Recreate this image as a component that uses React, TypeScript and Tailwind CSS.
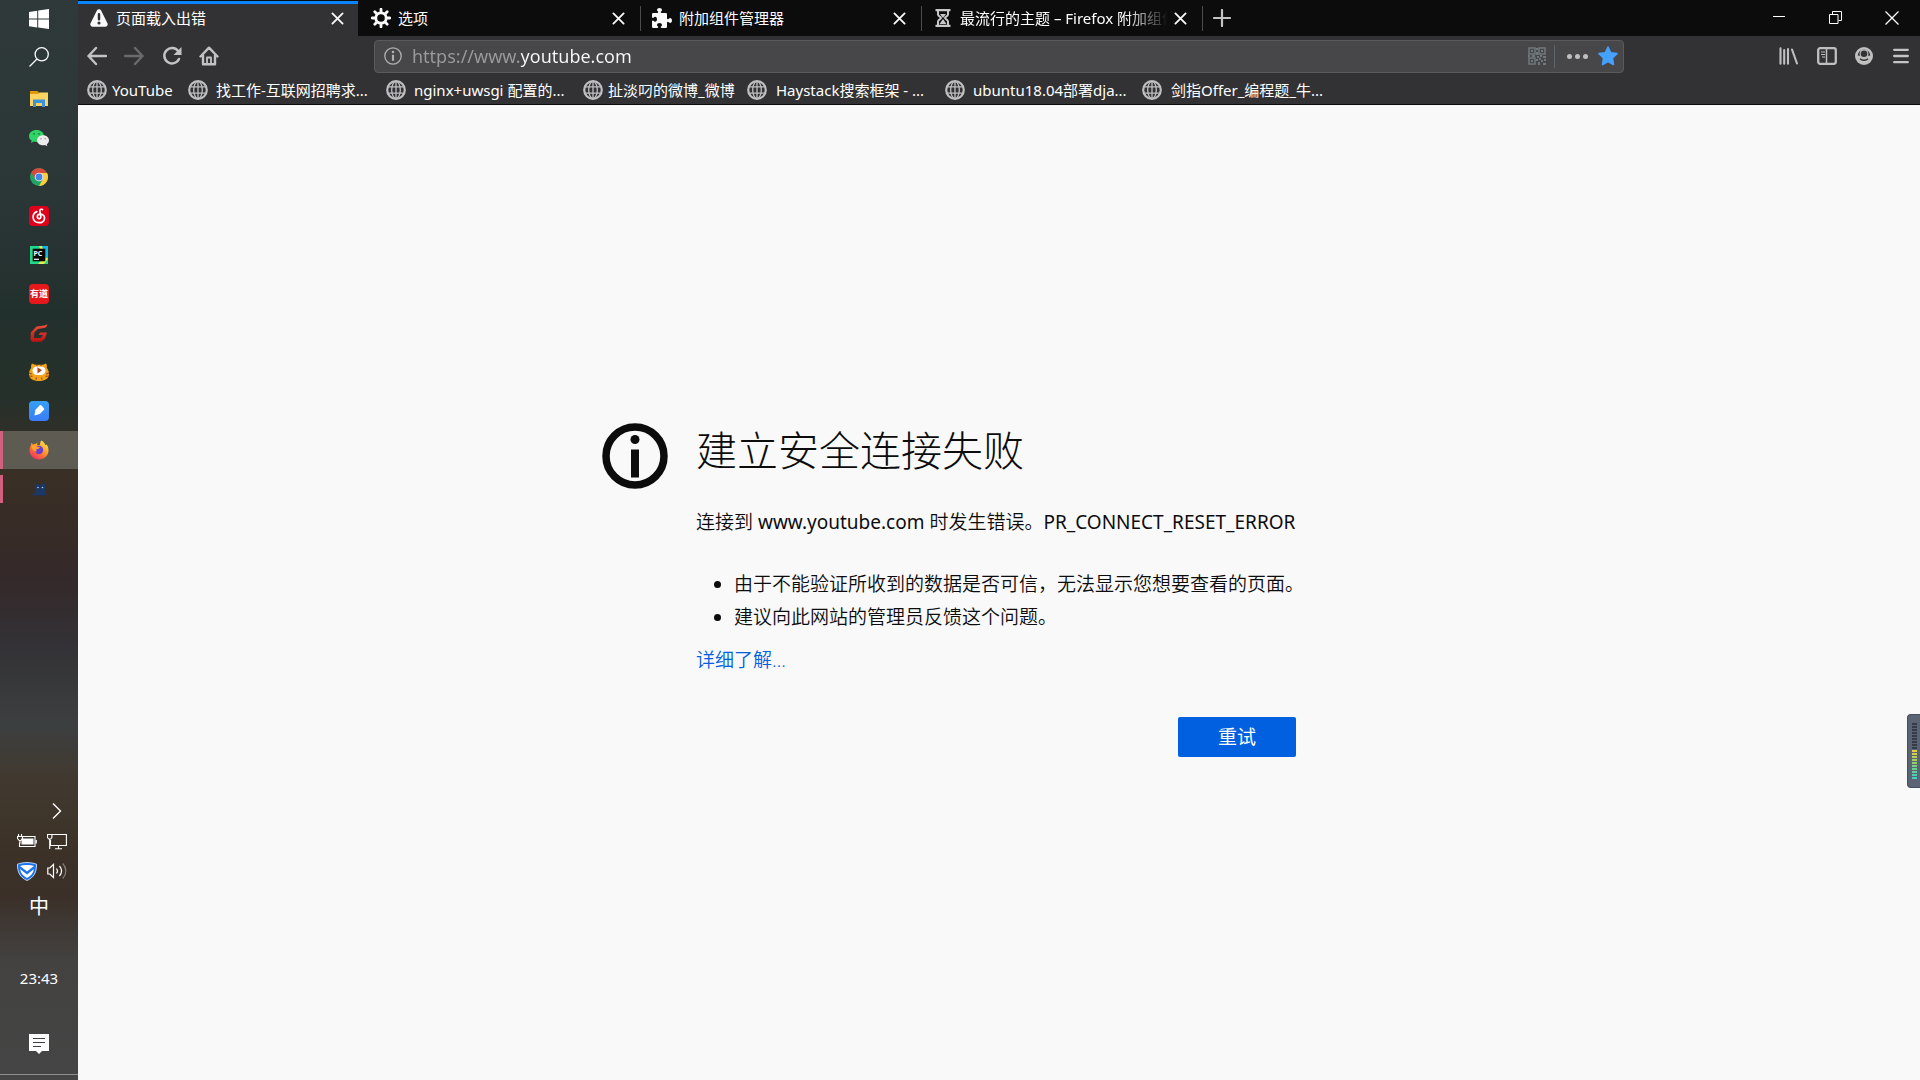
import type { ReactNode } from "react";

type IconProps = { className?: string };

const ui = "font-['Noto_Sans','Noto_Sans_CJK_SC',sans-serif]";

/* ---------- browser icons ---------- */

function CloseIcon({ className }: IconProps) {
  return (
    <svg viewBox="0 0 14 14" className={className} fill="none" stroke="currentColor" strokeWidth="2">
      <path d="M1.5 1.5l11 11M12.5 1.5l-11 11" strokeLinecap="round" />
    </svg>
  );
}

function WarningIcon() {
  return (
    <svg viewBox="0 0 16 16" className="size-5" fill="#f9f9fa" stroke="none">
      <path d="M14.742 12.106L9.789 2.2a2 2 0 0 0-3.578 0l-4.953 9.91A2 2 0 0 0 3.047 15h9.905a2 2 0 0 0 1.79-2.894zM7 5a1 1 0 0 1 2 0v4a1 1 0 0 1-2 0zm1 8.25A1.25 1.25 0 1 1 9.25 12 1.25 1.25 0 0 1 8 13.25z" />
    </svg>
  );
}

function GearIcon() {
  return (
    <svg viewBox="0 0 20 20" className="size-5" fill="none" stroke="#f9f9fa">
      <circle cx="10" cy="10" r="5.2" strokeWidth="2.8" />
      <path
        d="M10 1.2v3M10 15.8v3M1.2 10h3M15.800 10h3M3.800 3.800l2 2M14.200 14.200l2 2M3.800 16.200l2-2M14.200 5.800l2-2"
        strokeWidth="2.8"
        strokeLinecap="round"
      />
    </svg>
  );
}

function PuzzleIcon() {
  return (
    <svg viewBox="0 0 16 16" className="size-5" fill="#f9f9fa">
      <path d="M14.5 8c-.971 0-1 1-1.75 1a.765.765 0 0 1-.75-.75V5a1 1 0 0 0-1-1H7.75A.765.765 0 0 1 7 3.25c0-.75 1-.779 1-1.75C8 .635 7.1 0 6 0S4 .635 4 1.5c0 .971 1 1 1 1.75a.765.765 0 0 1-.75.75H1a1 1 0 0 0-1 1v2.25A.765.765 0 0 0 .75 8c.75 0 .779-1 1.75-1C3.365 7 4 7.9 4 9s-.635 2-1.5 2c-.971 0-1-1-1.75-1a.765.765 0 0 0-.75.75V15a1 1 0 0 0 1 1h3.25a.765.765 0 0 0 .75-.75c0-.75-1-.779-1-1.75 0-.865.9-1.5 2-1.5s2 .635 2 1.5c0 .971-1 1-1 1.75a.765.765 0 0 0 .75.75H11a1 1 0 0 0 1-1v-3.25a.765.765 0 0 1 .75-.75c.75 0 .779 1 1.75 1 .865 0 1.500-.9 1.500-2s-.635-2-1.500-2z" />
    </svg>
  );
}

function HourglassIcon() {
  return (
    <svg viewBox="0 0 16 18" className="h-[18px] w-4" fill="none" stroke="#c8c8ca">
      <path d="M0.500 1.200h15M0.500 16.800h15" strokeWidth="2.200" />
      <path d="M3 2v3.500c0 1.800 3 2.300 3 3.500s-3 1.700-3 3.500V16M13 2v3.500c0 1.800-3 2.300-3 3.500s3 1.700 3 3.500V16" strokeWidth="2" />
      <path d="M5 5h6L8 9zM8 10l3.500 5h-7z" fill="#c8c8ca" stroke="none" />
    </svg>
  );
}

function GlobeIcon() {
  return (
    <svg viewBox="0 0 20 20" className="size-5 shrink-0" fill="none" stroke="#bfbfc0">
      <circle cx="10" cy="10" r="8.800" strokeWidth="2.200" />
      <ellipse cx="10" cy="10" rx="4.300" ry="8.600" strokeWidth="1.300" />
      <path d="M10 1.500v17M2 6.800h16M2 13.200h16" strokeWidth="1.300" />
    </svg>
  );
}

function BackIcon() {
  return (
    <svg viewBox="0 0 20 20" className="size-5" fill="none" stroke="#c3c3c4" strokeWidth="2.400" strokeLinecap="round" strokeLinejoin="round">
      <path d="M19 10H1.500M9 2L1.500 10L9 18" />
    </svg>
  );
}

function ForwardIcon() {
  return (
    <svg viewBox="0 0 20 20" className="size-5" fill="none" stroke="#6a6a6c" strokeWidth="2.400" strokeLinecap="round" strokeLinejoin="round">
      <path d="M1 10h17.500M11 2l7.500 8L11 18" />
    </svg>
  );
}

function ReloadIcon() {
  return (
    <svg viewBox="0 0 20 20" className="size-5" fill="none" stroke="#c3c3c4" strokeWidth="2.500">
      <path d="M16.300 5.200A7.700 7.700 0 1 0 17 13" strokeLinecap="round" />
      <path d="M19.500 1v8h-8z" fill="#c3c3c4" stroke="none" />
    </svg>
  );
}

function HomeIcon() {
  return (
    <svg viewBox="0 0 20 20" className="size-5" fill="none" stroke="#c3c3c4" strokeWidth="2.400" strokeLinecap="round" strokeLinejoin="round">
      <path d="M1.500 10.500L10 1.700l8.500 8.800M4 9v9.300h12V9" />
      <path d="M8 18v-6.500h4V18" strokeWidth="1.800" />
    </svg>
  );
}

function InfoIcon({ className }: IconProps) {
  return (
    <svg viewBox="0 0 66 66" className={className} fill="none" stroke="currentColor">
      <circle cx="33" cy="33" r="29" strokeWidth="7.500" />
      <circle cx="33" cy="16.500" r="4.500" fill="currentColor" stroke="none" />
      <path d="M33 26.500v28" strokeWidth="8" />
    </svg>
  );
}

function SmallInfoIcon() {
  return (
    <svg viewBox="0 0 18 18" className="size-[18px] shrink-0" fill="none" stroke="#b0b0b2">
      <circle cx="9" cy="9" r="8.200" strokeWidth="1.300" />
      <circle cx="9" cy="5" r="1.300" fill="#b0b0b2" stroke="none" />
      <path d="M9 7.800v6" strokeWidth="2.200" />
    </svg>
  );
}

function QrIcon() {
  return (
    <svg viewBox="0 0 18 18" className="size-[18px]" fill="none" stroke="#71787f" strokeWidth="1.500">
      <path d="M1 1h6v6H1zM11 1h6v6h-6zM1 11h6v6H1z" />
      <path
        d="M3 3h2v2H3zM13 3h2v2h-2zM3 13h2v2H3zM8 1h2v2H8zM8 5h2v3H8zM0 8h2v2H0zM4 8h3v2H4zM9 9h2v2H9zM12 8h2v2h-2zM15 9h3v2h-3zM8 12h2v2H8zM11 11h2v2h-2zM13 13h2v2h-2zM16 12h2v2h-2zM10 15h2v3h-2zM15 16h3v2h-3z"
        fill="#71787f"
        stroke="none"
      />
    </svg>
  );
}

function StarIcon() {
  return (
    <svg viewBox="0 0 20 20" className="size-5" fill="#45a1ff" stroke="#45a1ff" strokeWidth="1.500" strokeLinejoin="round">
      <path d="M10 1l2.700 5.700 6.300.9-4.500 4.400 1 6.600-5.500-3-5.500 3 1-6.600L1 7.600l6.300-.9z" />
    </svg>
  );
}

function LibraryIcon() {
  return (
    <svg viewBox="0 0 20 18" className="h-[18px] w-5" fill="none" stroke="#bfbfc0" strokeWidth="2.100" strokeLinecap="round">
      <path d="M1.500 1.200v15.600M5.200 3v13.800M9 2v14.800M13 2.500l5 14" />
    </svg>
  );
}

function SidebarIcon() {
  return (
    <svg viewBox="0 0 20 18" className="h-[18px] w-5" fill="none" stroke="#bfbfc0">
      <rect x="1.200" y="1.200" width="17.600" height="15.600" rx="2" strokeWidth="2.300" />
      <path d="M9.500 2v14" strokeWidth="1.500" />
      <path d="M4 5h4M4 7.500h4M5 10h3" strokeWidth="1.200" />
    </svg>
  );
}

function AccountIcon() {
  return (
    <svg viewBox="0 0 18 18" className="size-[18px]" fill="none">
      <circle cx="9" cy="9" r="9" fill="#bfbfc0" />
      <path d="M9 2.600a6.300 6.300 0 0 0-6.300 6c1.300.2 2.400.1 3.300.5C6.600 10.600 7.700 11 9 11s2.400-.4 3-1.900c.9-.4 2-.3 3.300-.5A6.300 6.300 0 0 0 9 2.600z" fill="#323234" />
      <circle cx="9" cy="6.700" r="3.900" stroke="#bfbfc0" strokeWidth="1.200" fill="#323234" />
      <path d="M5 11.700c1.800 2.100 6.200 2.100 8 0" stroke="#323234" strokeWidth="1.400" />
    </svg>
  );
}

function MenuIcon() {
  return (
    <svg viewBox="0 0 16 16" className="size-4" fill="none" stroke="#c3c3c4" strokeWidth="2.300" strokeLinecap="round">
      <path d="M1.200 1.800h13.600M1.200 8h13.600M1.200 14.200h13.600" />
    </svg>
  );
}

/* ---------- taskbar icons ---------- */

function WindowsIcon() {
  return (
    <svg viewBox="0 0 20 20" className="size-5" fill="#fff">
      <path d="M0 2.900L8.200 1.700V9.600H0zM9.200 1.500L20 0v9.600H9.200zM0 10.500h8.200v7.900L0 17.200zM9.200 10.500H20V20L9.200 18.500z" />
    </svg>
  );
}

function SearchIcon() {
  return (
    <svg viewBox="0 0 20 20" className="size-5" fill="none" stroke="#fff" strokeWidth="1.300">
      <circle cx="12.700" cy="7.300" r="6.600" />
      <path d="M8 12L0.500 19.500" />
    </svg>
  );
}

function ExplorerIcon() {
  return (
    <svg viewBox="0 0 18 16" className="h-4 w-[18px]">
      <path d="M0 0h7.500L9 1.500V4H0z" fill="#e09a0b" />
      <path d="M0 3h8l1.500-1.500H18V15H0z" fill="#ffd45e" />
      <path d="M3 16V8.500h12V16h-3v-4H6v4z" fill="#3b93dc" />
    </svg>
  );
}

function WechatIcon() {
  return (
    <svg viewBox="0 0 20 18" className="h-[18px] w-5">
      <path d="M7.500 1C3.300 1 0 3.600 0 7c0 2 1 3.600 2.700 4.800L2 14l2.800-1.400c.9.300 1.800.4 2.700.4C11.700 13 15 10.400 15 7S11.700 1 7.500 1z" fill="#2fd366" />
      <path d="M14 6.300c-3.400 0-6 2.200-6 5s2.600 5 6 5c.7 0 1.400-.1 2-.3l2.300 1.200-.5-1.900c1.300-.9 2.200-2.300 2.200-4 0-2.800-2.600-5-6-5z" fill="#ececec" />
      <g fill="#1b7a3b">
        <circle cx="5" cy="4.800" r="0.900" />
        <circle cx="10" cy="4.800" r="0.900" />
      </g>
      <g fill="#8b8b8b">
        <circle cx="12" cy="9.800" r="0.700" />
        <circle cx="16.200" cy="9.800" r="0.700" />
      </g>
    </svg>
  );
}

function ChromeIcon() {
  return (
    <svg viewBox="0 0 18 18" className="size-[18px]">
      <circle cx="9" cy="9" r="9" fill="#1fa463" />
      <path d="M1.200 4.500L5.600 11 9 5h7.800A9 9 0 0 0 1.200 4.500z" fill="#d9483b" />
      <path d="M9 5h8.100A9 9 0 0 1 9 18l3.600-6.800z" fill="#fccd3f" />
      <circle cx="9" cy="9" r="4.300" fill="#f1f1f1" />
      <circle cx="9" cy="9" r="3.400" fill="#4483ec" />
    </svg>
  );
}

function NeteaseIcon() {
  return (
    <svg viewBox="0 0 20 20" className="size-5">
      <rect width="20" height="20" rx="4" fill="#e0001b" />
      <path
        d="M13.500 3.600c-1.500-.8-2.900 0-2.700 1.500l1 5.400c.4 2.600-3.200 2.900-3.500.6-.2-1.700 1-3 3-3 3.300.1 4.700 2.700 4.100 5.100-.6 2.300-2.700 3.500-5.400 3.500-3.400 0-5.900-2.300-5.900-5.600 0-2.700 1.400-4.600 3.700-5.500"
        fill="none"
        stroke="#fff"
        strokeWidth="1.700"
        strokeLinecap="round"
      />
    </svg>
  );
}

function PycharmIcon() {
  return (
    <svg viewBox="0 0 18 18" className="size-[18px]">
      <rect width="18" height="18" fill="#21d789" />
      <path d="M8 18l4-4 6-3v7z" fill="#e5ee4c" />
      <path d="M9 0h3l4 8-3 3z" fill="#e5ee4c" />
      <path d="M12 0h6v13l-3-4z" fill="#14b6e8" />
      <path d="M14 18l4-5v5z" fill="#21d789" />
      <rect x="2.700" y="2.700" width="12.600" height="12.600" fill="#050505" />
      <text x="3.500" y="9.500" fontSize="7" fontWeight="700" fill="#fff" fontFamily="Noto Sans, sans-serif">
        PC
      </text>
      <path d="M4 13.300h5" stroke="#fff" strokeWidth="1.200" />
    </svg>
  );
}

function YoudaoIcon() {
  return (
    <span className="flex size-5 items-center justify-center rounded bg-[#e5191b] text-[9px] leading-none font-bold whitespace-nowrap text-white">
      有道
    </span>
  );
}

function RedGIcon() {
  return (
    <svg viewBox="0 0 18 18" className="size-[18px]">
      <defs>
        <linearGradient id="redG" x1="0" y1="0" x2="0" y2="1">
          <stop offset="0" stopColor="#f0503a" />
          <stop offset="1" stopColor="#b81313" />
        </linearGradient>
      </defs>
      <path d="M17.500 0.300C17 3 15.500 4 12.500 4.300L8 5 4.300 8.500 4 14h6.500l2.500-3H8.500L10 8.500h7l-2 6-3.500 3.200H2L0.500 15.500 0.800 8.500 6.500 2.500 12 1.800c2.500-.3 4-.6 5.500-1.500z" fill="url(#redG)" />
    </svg>
  );
}

function TigerIcon() {
  return (
    <svg viewBox="0 0 20 18" className="h-[18px] w-5">
      <path d="M3 0.500l3 1.300h8l3-1.300c1 1 1 3 .8 4.200C19.500 7 20 9 20 11c0 4.500-4 7-10 7S0 15.500 0 11c0-2 .5-4 2.200-6.300C2 3.500 2 1.500 3 .5z" fill="#f5a21b" />
      <path d="M0 10l3 1M0 13l3.500.3M20 10l-3 1M20 13l-3.500.3M8 2v1.500M12 2v1.500M7 16.500l.5-2M13 16.500l-.5-2" stroke="#a8501a" strokeWidth="1.200" />
      <rect x="3.500" y="3.500" width="13" height="8.500" rx="4.200" fill="#fff" />
      <path d="M8.500 4.300l4.500 3-4.500 3.200z" fill="#b2441c" />
    </svg>
  );
}

function NoteAppIcon() {
  return (
    <svg viewBox="0 0 20 20" className="size-5">
      <defs>
        <linearGradient id="noteApp" x1="0" y1="0" x2="0" y2="1">
          <stop offset="0" stopColor="#35a0f5" />
          <stop offset="1" stopColor="#3b7cf7" />
        </linearGradient>
      </defs>
      <rect width="20" height="20" rx="4" fill="url(#noteApp)" />
      <path d="M5.500 14.500L6.300 9 10.500 4.600c.8-.7 1.400-.6 2 0l2.200 2.300c.6.6.7 1.300 0 2L10.800 13z" fill="#fff" />
    </svg>
  );
}

function FirefoxIcon() {
  return (
    <svg viewBox="0 0 20 20" className="size-5">
      <defs>
        <linearGradient id="fox" x1="0.900" y1="0" x2="0.200" y2="1">
          <stop offset="0" stopColor="#fff14f" />
          <stop offset="0.450" stopColor="#ff9a2a" />
          <stop offset="1" stopColor="#f5275e" />
        </linearGradient>
      </defs>
      <path d="M12.500 0.500c2.200 1.300 3.300 3 3.600 4.300.9.300 1.200.1 1.400-.2 1.500 1.700 2 3.700 2 5.700C19.500 15.500 15.300 19.500 10 19.500S0.500 15.500 0.500 10.500C0.500 8 1.300 6 2 5l.3-2.300c1 .7 1.400 1.400 1.600 1.800.8-.5 2-.6 2.600-.5.8-.8 1.700-1.200 2.600-1.400-1 .7-1.300 1.700-1.200 2.500l3-.2c.3-2 .5-3.300 1.600-4.400z" fill="url(#fox)" />
      <circle cx="10" cy="10" r="4.200" fill="#6a3fd0" />
      <path d="M2.500 6c2-.8 4-.6 5.500.7l3 .5c-.7 1.500-2.500 1.500-3.300 2-.8.600-.6 1.800.3 2.300-2 .3-5-1.500-5.500-5.500z" fill="#ffa52b" />
    </svg>
  );
}

function BlueCatIcon() {
  return (
    <svg viewBox="0 0 16 14" className="h-3.5 w-4">
      <path d="M4 0.500l2.500 2h5l2.500-2 .5 6.500 1 6.500H4.500C2 13.500 1 12.500 1 11h1.500l1.500 1z" fill="#1b3763" />
      <circle cx="7" cy="5.500" r="0.800" fill="#b9cdea" />
      <circle cx="11.500" cy="5.500" r="0.800" fill="#b9cdea" />
    </svg>
  );
}

function BatteryIcon() {
  return (
    <svg viewBox="0 0 20 16" className="h-4 w-5" fill="none" stroke="#fff" strokeWidth="1.100">
      <path d="M6 3.500h12v10H2.500V9.500M19.300 7v3.500" />
      <rect x="4.500" y="5.500" width="12" height="6" fill="#fff" stroke="none" />
      <path d="M1.500 1v2.500M4.500 1v2.500M0.500 3.500h5v2L3.800 7.500H2.200L.5 5.500zM3 7.500v3" />
    </svg>
  );
}

function NetworkIcon() {
  return (
    <svg viewBox="0 0 20 17" className="h-[17px] w-5" fill="none" stroke="#fff" strokeWidth="1.100">
      <path d="M5 1.500h14.400v11H3.500V7M11.500 12.500v3M8 15.800h7" />
      <path d="M0.500 1.500h4.400v3L3.700 6H1.700L.5 4.500zM2.700 6v10" />
    </svg>
  );
}

function ShieldIcon() {
  return (
    <svg viewBox="0 0 20 19" className="h-[19px] w-5">
      <path d="M10 0.500C7 .5 3 1.200.5 2.200.3 10 3 15.500 10 18.500 17 15.500 19.700 10 19.500 2.200 17 1.200 13 .5 10 .5z" fill="#1a73f0" stroke="#e6f1ff" strokeWidth="0.800" />
      <path d="M3 4c2-.6 4.500-1 7-1s5 .4 7 1L10 9.500zM3 7l7 5.500L17 7c-.7 4-3 7-7 9-4-2-6.300-5-7-9z" fill="#fff" />
    </svg>
  );
}

function SpeakerIcon() {
  return (
    <svg viewBox="0 0 20 18" className="h-[18px] w-5" fill="none" stroke="#fff" strokeWidth="1.200">
      <path d="M0.800 6h2L6.500 2.500v13L2.800 12h-2z" />
      <path d="M9.500 6.500c1.200 1.500 1.200 3.500 0 5M12.500 4c2.500 3 2.500 7 0 10" />
      <path d="M15.800 1.500c4 4.500 4 10.500 0 15" stroke="#85807a" />
    </svg>
  );
}

function NotificationIcon() {
  return (
    <svg viewBox="0 0 20 20" className="size-5">
      <path d="M0 0h20v17h-7l-3 3-3-3H0z" fill="#fff" />
      <path d="M4 4.500h12M4 8.500h12M4 12.500h8" stroke="#3f3f3f" strokeWidth="1.200" />
    </svg>
  );
}

/* ---------- layout pieces ---------- */

const pinned: { name: string; icon: ReactNode }[] = [
  { name: "文件资源管理器", icon: <ExplorerIcon /> },
  { name: "微信", icon: <WechatIcon /> },
  { name: "Chrome", icon: <ChromeIcon /> },
  { name: "网易云音乐", icon: <NeteaseIcon /> },
  { name: "PyCharm", icon: <PycharmIcon /> },
  { name: "有道", icon: <YoudaoIcon /> },
  { name: "下载", icon: <RedGIcon /> },
  { name: "直播", icon: <TigerIcon /> },
  { name: "笔记", icon: <NoteAppIcon /> },
];

function Taskbar() {
  return (
    <aside className="flex w-[78px] shrink-0 flex-col items-stretch bg-[linear-gradient(to_bottom,#2f393a_0%,#2b3637_18%,#22302d_29%,#26302a_37%,#392f25_44%,#372b27_50%,#34292b_54%,#333236_60%,#3c3f40_67%,#41392f_72%,#3b3127_79%,#3b3029_83%,#434241_89%,#454545_100%)]">
      <button aria-label="开始" className="flex h-[38px] items-center justify-center">
        <WindowsIcon />
      </button>
      <button aria-label="搜索" className="mb-[3px] flex h-[38px] items-center justify-center">
        <SearchIcon />
      </button>
      {pinned.map((app) => (
        <button key={app.name} aria-label={app.name} className="flex h-[39px] items-center justify-center">
          {app.icon}
        </button>
      ))}
      <button aria-label="Firefox" className="mt-px flex h-[38px] items-center justify-center border-l-[3px] border-[#d35f7e] bg-[#5e5b53] pr-[3px]">
        <FirefoxIcon />
      </button>
      <button aria-label="猫" className="mt-1.5 flex h-7 items-center justify-center border-l-[3px] border-[#d35f7e] pr-[3px]">
        <BlueCatIcon />
      </button>
      <div className="mt-auto flex flex-col">
        <button aria-label="显示隐藏的图标" className="mr-4 flex h-[30px] items-center justify-end">
          <svg viewBox="0 0 10 16" className="h-4 w-2.5" fill="none" stroke="#fff" strokeWidth="1.400">
            <path d="M1 0.500L8.500 8 1 15.500" />
          </svg>
        </button>
        <div className="grid grid-cols-2 justify-items-center pr-1.5 pl-3">
          <button aria-label="电源" className="flex h-[30px] items-center">
            <BatteryIcon />
          </button>
          <button aria-label="网络" className="flex h-[30px] items-center">
            <NetworkIcon />
          </button>
          <button aria-label="安全" className="flex h-[30px] items-center">
            <ShieldIcon />
          </button>
          <button aria-label="音量" className="flex h-[30px] items-center">
            <SpeakerIcon />
          </button>
        </div>
        <button className="flex h-[42px] items-center justify-center text-xl text-white">中</button>
        <time className="mt-9 flex h-7 items-center justify-center text-[15px] text-white">23:43</time>
        <button aria-label="通知" className="mt-[42px] mb-5 flex h-5 items-center justify-center">
          <NotificationIcon />
        </button>
        <div className="mb-[5px] h-px bg-[#8f8f8f]" />
      </div>
    </aside>
  );
}

const tabs: { title: string; icon: ReactNode }[] = [
  { title: "页面载入出错", icon: <WarningIcon /> },
  { title: "选项", icon: <GearIcon /> },
  { title: "附加组件管理器", icon: <PuzzleIcon /> },
  { title: "最流行的主题 – Firefox 附加组件", icon: <HourglassIcon /> },
];

function TabStrip() {
  return (
    <div className="flex h-9 bg-[#0c0c0d] text-white">
      <div className="flex">
        {tabs.map((tab, i) => (
          <div
            key={tab.title}
            className={
              i === 0
                ? "mt-px mr-0.5 flex w-[280px] items-center border-t-[3px] border-[#0a84ff] bg-[#323234] pr-3.5 pb-1 pl-[11px]"
                : "relative flex w-[281px] items-center pr-4 pl-[11px] after:absolute after:top-1.5 after:right-0 after:h-[25px] after:w-px after:bg-[#4c4c4e]"
            }
          >
            <span className="mr-[7px] flex w-5 shrink-0 justify-center">{tab.icon}</span>
            <button
              className={
                i === 3
                  ? "min-w-0 flex-1 overflow-hidden mask-r-from-80% text-left text-[15px] leading-5 whitespace-nowrap"
                  : "min-w-0 flex-1 overflow-hidden text-left text-[15px] leading-5 whitespace-nowrap"
              }
            >
              {tab.title}
            </button>
            <button aria-label="关闭标签页" className="ml-1.5 shrink-0 text-[#f9f9fa]">
              <CloseIcon className="size-[13px]" />
            </button>
          </div>
        ))}
      </div>
      <button aria-label="新建标签页" className="ml-2.5 flex items-center">
        <svg viewBox="0 0 18 18" className="size-[18px]" stroke="#c3c3c4" strokeWidth="2.200" strokeLinecap="round">
          <path d="M9 1v16M1 9h16" />
        </svg>
      </button>
      <div className="ml-auto flex text-white">
        <button aria-label="最小化" className="flex h-[34px] w-14 items-center justify-center">
          <svg viewBox="0 0 12 12" className="size-3" stroke="#fff">
            <path d="M0 5.500h12" />
          </svg>
        </button>
        <button aria-label="还原" className="flex h-[35px] w-14 items-center justify-center">
          <svg viewBox="0 0 13 13" className="size-[13px]" fill="none" stroke="#fff">
            <path d="M0.500 3.500h8.500v9H0.500zM3.500 3V0.500h9v9H9.500" />
          </svg>
        </button>
        <button aria-label="关闭" className="flex h-9 w-[57px] items-center justify-center">
          <svg viewBox="0 0 14 14" className="size-3.5" stroke="#fff" strokeWidth="1.300">
            <path d="M0.500 0.500l13 13M13.500 0.500l-13 13" />
          </svg>
        </button>
      </div>
    </div>
  );
}

function NavBar() {
  return (
    <div className="flex h-10 items-center bg-[#323234] pr-[11px] pl-[9px]">
      <div className="flex w-[287px] shrink-0 items-center gap-[17px]">
        <button aria-label="后退">
          <BackIcon />
        </button>
        <button aria-label="前进">
          <ForwardIcon />
        </button>
        <button aria-label="刷新" className="ml-px">
          <ReloadIcon />
        </button>
        <button aria-label="主页">
          <HomeIcon />
        </button>
      </div>
      <div className="flex h-[33px] flex-1 items-center rounded-sm border border-[#5a5a5c] bg-[#474749] pr-[5px] pl-[9px]">
        <SmallInfoIcon />
        <input
          aria-label="地址栏"
          defaultValue="https://www.youtube.com"
          className="ml-2.5 min-w-0 flex-1 bg-[linear-gradient(to_right,#9b9b9d_109px,#f9f9fa_109px)] bg-clip-text text-lg leading-7 text-transparent outline-none"
        />
        <button aria-label="二维码">
          <QrIcon />
        </button>
        <span className="mx-2 h-[23px] w-px bg-[#60656d]" />
        <button aria-label="页面操作" className="ml-1 flex gap-[3px]">
          <span className="size-[5px] rounded-full bg-[#bfbfc0]" />
          <span className="size-[5px] rounded-full bg-[#bfbfc0]" />
          <span className="size-[5px] rounded-full bg-[#bfbfc0]" />
        </button>
        <button aria-label="收藏" className="ml-2.5">
          <StarIcon />
        </button>
      </div>
      <div className="ml-[155px] flex items-center gap-[18px]">
        <button aria-label="我的足迹">
          <LibraryIcon />
        </button>
        <button aria-label="侧栏">
          <SidebarIcon />
        </button>
        <button aria-label="账户">
          <AccountIcon />
        </button>
        <button aria-label="菜单" className="ml-0.5">
          <MenuIcon />
        </button>
      </div>
    </div>
  );
}

const bookmarks = [
  { title: "YouTube", size: "w-[101px] gap-[5px]" },
  { title: "找工作-互联网招聘求...", size: "w-[198px] gap-2" },
  { title: "nginx+uwsgi 配置的...", size: "w-[197px] gap-2" },
  { title: "扯淡叼的微博_微博", size: "w-[164px] gap-[5px]" },
  { title: "Haystack搜索框架 - ...", size: "w-[198px] gap-[9px]" },
  { title: "ubuntu18.04部署dja...", size: "w-[197px] gap-2" },
  { title: "剑指Offer_编程题_牛...", size: "w-[198px] gap-[9px]" },
];

function BookmarksBar() {
  return (
    <nav className="flex h-[29px] border-b border-[#0c0c0d] bg-[#323234] pl-[9px] text-white">
      {bookmarks.map((b) => (
        <a key={b.title} href="#" className={`flex shrink-0 items-center text-[15px] leading-5 whitespace-nowrap ${b.size}`}>
          <GlobeIcon />
          {b.title}
        </a>
      ))}
    </nav>
  );
}

function ErrorPage() {
  return (
    <main className="flex flex-1 items-center justify-center bg-[#f9f9fa] text-[#0c0c0d]">
      <div className="grid grid-cols-[94px_604px_96px]">
        <InfoIcon className="mt-[3px] size-[66px]" />
        <div className="text-[19px] leading-[33px] font-[350]">
          <h1 className="text-[41px] leading-[60px] font-extralight">建立安全连接失败</h1>
          <p className="mt-[26px] whitespace-nowrap">
            连接到 <span className="font-normal">www.youtube.com</span> 时发生错误。<span className="font-normal">PR_CONNECT_RESET_ERROR</span>
          </p>
          <ul className="mt-[29px] list-disc pl-[38px] whitespace-nowrap">
            <li>由于不能验证所收到的数据是否可信，无法显示您想要查看的页面。</li>
            <li>建议向此网站的管理员反馈这个问题。</li>
          </ul>
          <a href="#" className="mt-2.5 block text-[#0060df]">
            详细了解…
          </a>
          <div className="mt-10 mr-1 mb-2 flex justify-end">
            <button className="h-10 w-[118px] rounded-xs bg-[#0060df] font-normal text-white">重试</button>
          </div>
        </div>
        <span />
      </div>
    </main>
  );
}

function LevelMeter() {
  const bars = [
    "bg-[#333a48]", "bg-[#333a48]", "bg-[#333a48]", "bg-[#333a48]", "bg-[#333a48]", "bg-[#333a48]", "bg-[#333a48]", "bg-[#333a48]", "bg-[#333a48]",
    "bg-[#e3cf45]", "bg-[#d3cf4c]", "bg-[#bccf55]", "bg-[#a5d05f]", "bg-[#90d06b]", "bg-[#7cd07c]", "bg-[#6ad08d]", "bg-[#5cd09e]", "bg-[#50cfae]", "bg-[#46cfbc]",
  ];
  return (
    <div className="absolute top-[714px] right-0 flex h-[74px] w-[13px] flex-col items-center justify-center gap-px rounded-l border border-r-0 border-[#474f5e] bg-[#5b6475]">
      {bars.map((c, i) => (
        <span key={i} className={`h-0.5 w-[5px] ${c}`} />
      ))}
    </div>
  );
}

export default function App() {
  return (
    <div className={`relative flex min-h-screen overflow-hidden ${ui}`}>
      <Taskbar />
      <div className="flex min-w-0 flex-1 flex-col">
        <header>
          <TabStrip />
          <NavBar />
          <BookmarksBar />
        </header>
        <ErrorPage />
      </div>
      <LevelMeter />
    </div>
  );
}
